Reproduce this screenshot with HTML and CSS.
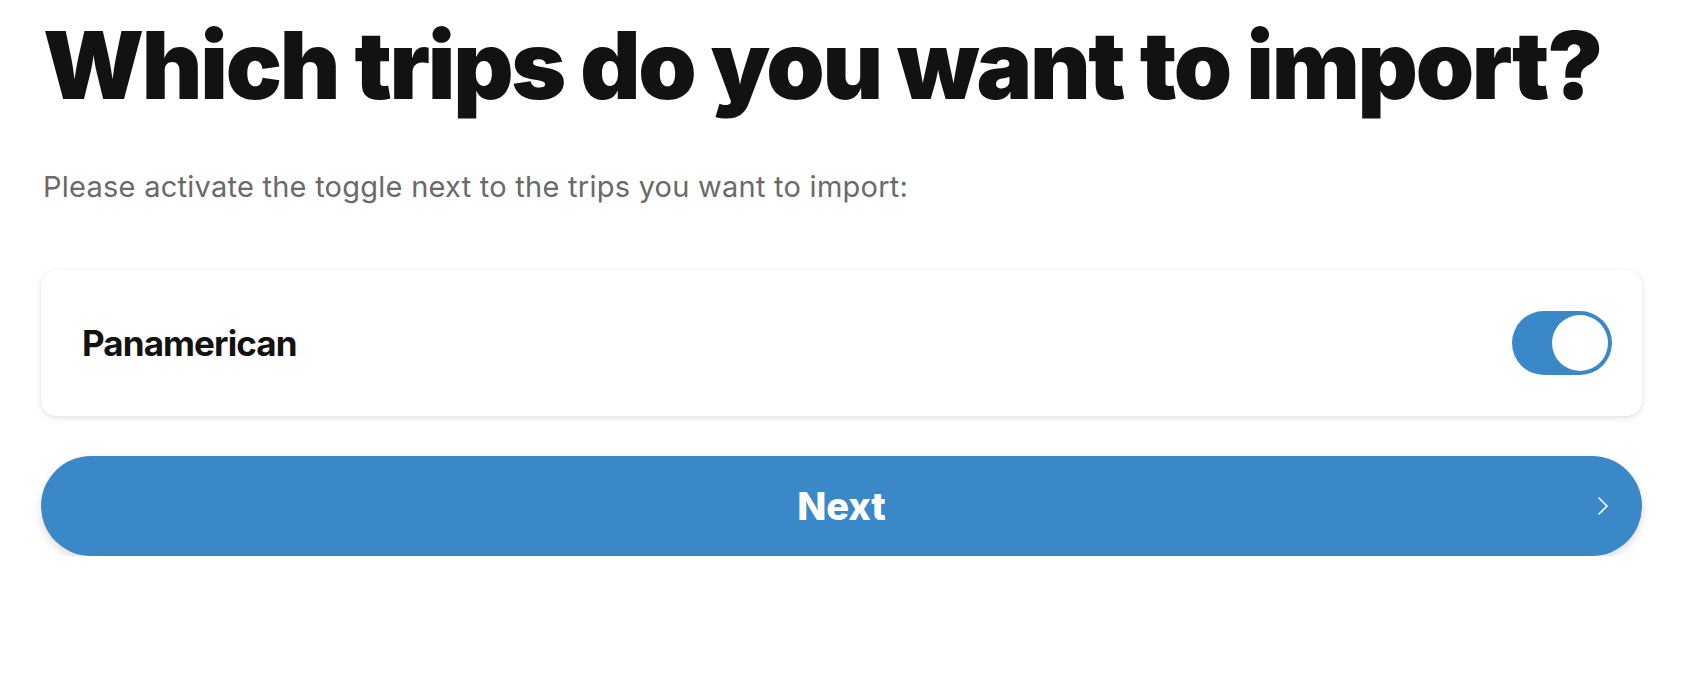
FILE: index.html
```html
<!DOCTYPE html>
<html lang="en">
<head>
<meta charset="utf-8">
<title>Import trips</title>
<link rel="stylesheet" href="styles.css">
</head>
<body>
<main class="page">
  <h1 class="title">Which trips do you want to import?</h1>
  <p class="subtitle">Please activate the toggle next to the trips you want to import:</p>
  <div class="trip-card">
    <span class="trip-name">Panamerican</span>
    <span class="toggle is-on" role="switch" aria-checked="true"><span class="toggle-knob"></span></span>
  </div>
  <button class="next-btn" type="button">
    <span class="next-label">Next</span>
    <svg class="next-chevron" width="12" height="20" viewBox="0 0 12 20" aria-hidden="true"><path d="M2 2 L10 10 L2 18" fill="none" stroke="#ffffff" stroke-width="1.6" stroke-linecap="round" stroke-linejoin="round"/></svg>
  </button>
</main>
</body>
</html>
```
FILE: styles.css
```css
html, body {
  margin: 0;
  padding: 0;
  background: #ffffff;
}
body {
  font-family: Inter, Lato, "Liberation Sans", sans-serif;
  color: #121212;
}
.page {
  padding: 9px 64px 0 41px;
  display: flex;
  flex-direction: column;
}
.title {
  margin: 0;
  font-size: 93.5px;
  line-height: 1.2;
  font-weight: 900;
  letter-spacing: -2.3px;
  padding-left: 2px;
  color: #121212;
}
.subtitle {
  margin: 49px 0 0;
  padding-left: 2px;
  font-size: 29px;
  line-height: 1.2;
  font-weight: 400;
  letter-spacing: 0.25px;
  color: #6a6a6a;
}
.trip-card {
  margin-top: 65px;
  height: 146px;
  box-sizing: border-box;
  background: #ffffff;
  border-radius: 16px;
  box-shadow: 0 2px 6px rgba(0, 0, 0, 0.12), 0 0 2px rgba(0, 0, 0, 0.04);
  display: flex;
  align-items: center;
  justify-content: space-between;
  padding: 0 30px 0 41px;
}
.trip-name {
  font-size: 35px;
  font-weight: 700;
  letter-spacing: -0.9px;
  color: #121212;
}
.toggle {
  width: 100px;
  height: 64px;
  border-radius: 32px;
  background: #3a88c8;
  box-sizing: border-box;
  padding: 4px;
  display: flex;
  justify-content: flex-end;
}
.toggle-knob {
  width: 56px;
  height: 56px;
  border-radius: 50%;
  background: #ffffff;
}
.next-btn {
  margin-top: 40px;
  height: 100px;
  border: none;
  border-radius: 50px;
  background: #3a88c8;
  box-shadow: 0 4px 10px rgba(0, 0, 0, 0.14);
  display: flex;
  align-items: center;
  justify-content: center;
  position: relative;
  font-family: Inter, Lato, "Liberation Sans", sans-serif;
  cursor: pointer;
}
.next-label {
  font-size: 38px;
  font-weight: 800;
  color: #ffffff;
}
.next-chevron {
  position: absolute;
  right: 33px;
  top: 40px;
}
```
